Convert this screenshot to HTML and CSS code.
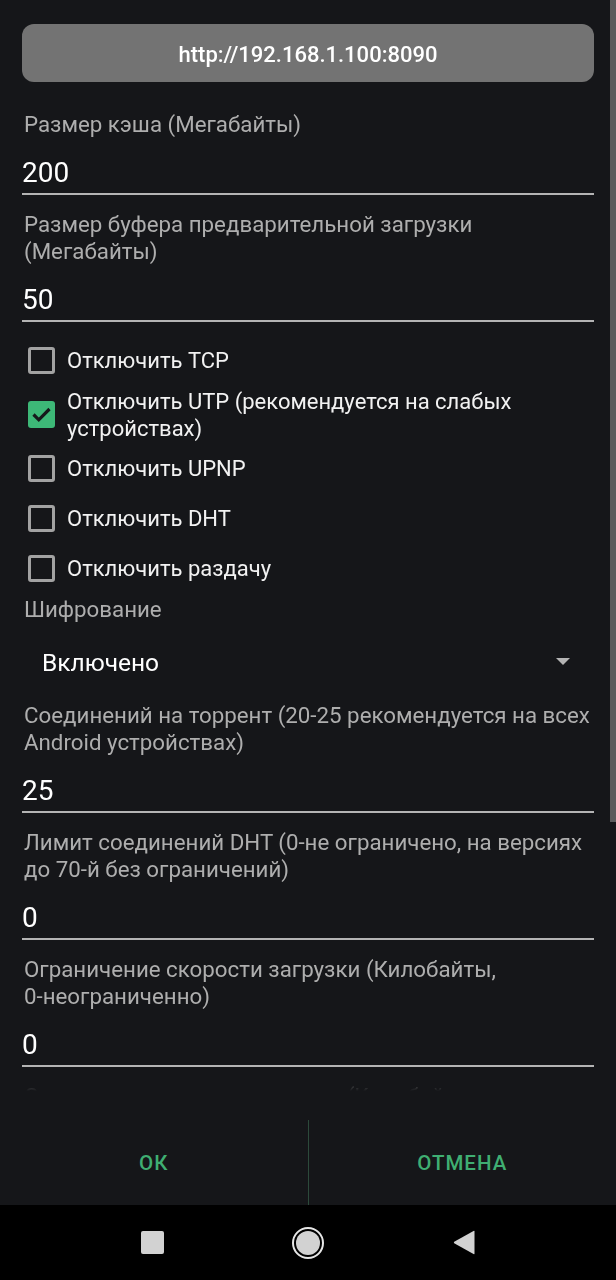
FILE: index.html
```html
<!DOCTYPE html>
<html lang="ru">
<head>
<meta charset="utf-8">
<title>Настройки</title>
<link rel="stylesheet" href="styles.css">
</head>
<body>
<div class="dialog">
  <div class="scroll">
    <div class="content">
      <div class="url-btn">http://192.168.1.100:8090</div>

      <div class="label first">Размер кэша (Мегабайты)</div>
      <div class="field">200</div>

      <div class="label">Размер буфера предварительной загрузки (Мегабайты)</div>
      <div class="field">50</div>

      <div class="checks">
        <div class="check"><span class="box"></span><span class="ctext">Отключить TCP</span></div>
        <div class="check tall"><span class="box on"><svg viewBox="0 0 27 27" width="27" height="27"><polyline points="5.5,13.5 10.8,18.8 21.5,8" fill="none" stroke="#16181b" stroke-width="3.2"/></svg></span><span class="ctext">Отключить UTP (рекомендуется на слабых устройствах)</span></div>
        <div class="check short"><span class="box"></span><span class="ctext">Отключить UPNP</span></div>
        <div class="check"><span class="box"></span><span class="ctext">Отключить DHT</span></div>
        <div class="check"><span class="box"></span><span class="ctext">Отключить раздачу</span></div>
      </div>

      <div class="label enc">Шифрование</div>
      <div class="spinner"><span class="stext">Включено</span><span class="arrow"></span></div>

      <div class="label">Соединений на торрент (20-25 рекомендуется на всех Android устройствах)</div>
      <div class="field">25</div>

      <div class="label">Лимит соединений DHT (0-не ограничено, на версиях до 70-й без ограничений)</div>
      <div class="field">0</div>

      <div class="label">Ограничение скорости загрузки (Килобайты, <span class="nw">0-неограниченно)</span></div>
      <div class="field">0</div>

      <div class="label">Ограничение скорости отдачи (Килобайты, <span class="nw">0-неограниченно)</span></div>
      <div class="field">0</div>
    </div>
    <div class="scrollbar"></div>
  </div>
  <div class="actions">
    <div class="action">ОК</div>
    <div class="divider"></div>
    <div class="action">ОТМЕНА</div>
  </div>
</div>
<div class="navbar">
  <span class="nav-square"></span>
  <span class="nav-home"><span class="nav-home-inner"></span></span>
  <svg class="nav-back" viewBox="0 0 23 25" width="23" height="25"><path d="M21.5 1.5 L21.5 23.5 Q21.5 24.5 20.5 24 L1.2 13.2 Q0.4 12.5 1.2 11.8 L20.5 1 Q21.5 0.5 21.5 1.5 Z" fill="#d2d2d2"/></svg>
</div>
</body>
</html>
```
FILE: styles.css
```css
html, body {
  margin: 0;
  padding: 0;
}
body {
  width: 616px;
  height: 1280px;
  overflow: hidden;
  background: #151619;
  font-family: Roboto, "Noto Sans", "DejaVu Sans", sans-serif;
  color: #fff;
}
.dialog {
  height: 1205px;
  display: flex;
  flex-direction: column;
  background: #151619;
}
.scroll {
  position: relative;
  height: 1120px;
  overflow: hidden;
  -webkit-mask-image: linear-gradient(to bottom, #000 1072px, transparent 1091px);
  mask-image: linear-gradient(to bottom, #000 1072px, transparent 1091px);
}
.content {
  padding: 24px 22px 0 22px;
  display: flex;
  flex-direction: column;
}
.scrollbar {
  position: absolute;
  top: 0;
  right: 0;
  width: 6px;
  height: 822px;
  background: #5b5b5c;
}
.url-btn {
  height: 58px;
  border-radius: 12px;
  background: #737373;
  display: flex;
  align-items: center;
  justify-content: center;
  font-size: 22px;
  font-weight: 500;
  color: #fff;
  padding-top: 2px;
  box-sizing: border-box;
}
.label {
  font-size: 22.3px;
  line-height: 27px;
  color: #aeaeae;
  padding-left: 2px;
  margin-top: 15.5px;
}
.nw {
  white-space: nowrap;
}
.label.first {
  margin-top: 28.5px;
}
.label.enc {
  margin-top: 2.5px;
}
.field {
  margin-top: 18.5px;
  font-size: 28px;
  line-height: 34px;
  color: #fff;
  padding-bottom: 3px;
  border-bottom: 2px solid #b4b4b4;
}
.checks {
  margin-top: 14px;
  display: flex;
  flex-direction: column;
}
.check {
  height: 50px;
  display: flex;
  align-items: center;
  gap: 12px;
  padding-left: 6px;
}
.check:first-child {
  height: 49px;
}
.check.tall {
  height: 59px;
}
.check.short {
  height: 49px;
}
.box {
  flex: none;
  width: 27px;
  height: 27px;
  box-sizing: border-box;
  border: 3px solid #a2a2a2;
  border-radius: 3px;
}
.box.on {
  border: none;
  background: #3db877;
}
.box svg {
  display: block;
}
.ctext {
  font-size: 22px;
  line-height: 27px;
  color: #f2f2f2;
}
.spinner {
  margin-top: 15.5px;
  height: 48px;
  display: flex;
  align-items: center;
  justify-content: space-between;
  padding: 0 24px 0 20px;
}
.stext {
  font-size: 24.5px;
  color: #fff;
}
.arrow {
  width: 0;
  height: 0;
  border-left: 7.5px solid transparent;
  border-right: 7.5px solid transparent;
  border-top: 7px solid #b4b4b4;
  margin-top: -2px;
}
.actions {
  height: 85px;
  display: flex;
  align-items: stretch;
}
.action {
  flex: 1;
  display: flex;
  align-items: center;
  justify-content: center;
  color: #3fae72;
  font-size: 20.5px;
  font-weight: 500;
  letter-spacing: 1px;
}
.divider {
  width: 1px;
  background: #2c4a3b;
}
.navbar {
  height: 75px;
  background: #000;
  display: flex;
  align-items: center;
  justify-content: center;
  gap: 128.5px;
}
.nav-square {
  width: 23px;
  height: 23px;
  border-radius: 2px;
  background: #d2d2d2;
}
.nav-home {
  width: 32px;
  height: 32px;
  box-sizing: border-box;
  border: 2px solid #e6e6e6;
  border-radius: 50%;
  display: flex;
  align-items: center;
  justify-content: center;
}
.nav-home-inner {
  width: 24px;
  height: 24px;
  border-radius: 50%;
  background: #d2d2d2;
}
.nav-back {
  display: block;
}
```
